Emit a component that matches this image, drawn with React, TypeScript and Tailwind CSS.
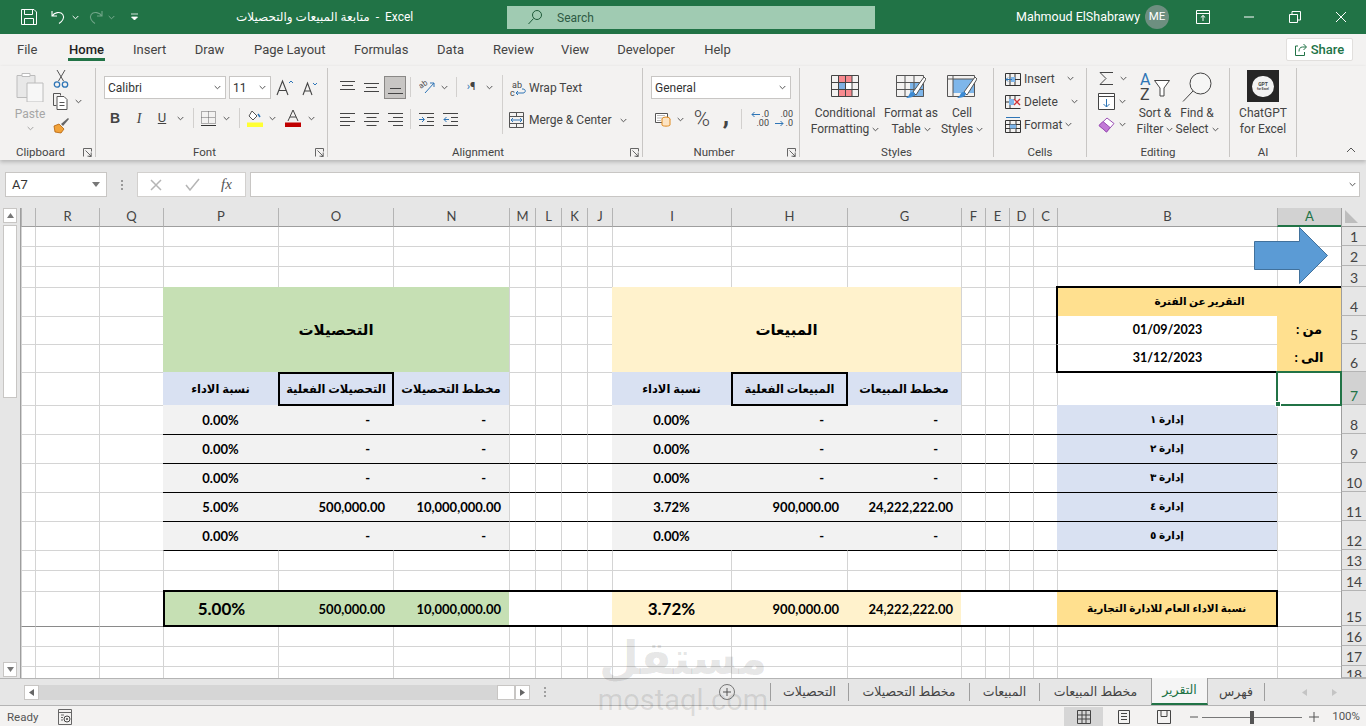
import React from "react";

const cols = ["", "R", "Q", "P", "O", "N", "M", "L", "K", "J", "I", "H", "G", "F", "E", "D", "C", "B", "A"];
const rowNums = Array.from({ length: 18 }, (_, i) => i + 1);

const Chev = ({ c = "#555" }: { c?: string }) => (
  <svg width="7" height="5" viewBox="0 0 7 5" className="shrink-0"><path d="M.7 1l2.8 2.8L6.3 1" fill="none" stroke={c} strokeWidth="1" /></svg>
);
const Launcher = () => (
  <svg width="9" height="9" viewBox="0 0 9 9" className="shrink-0"><path d="M.5 8.500v-8h8v3M2.500 2.500l5.500 5.500M8.200 4.500v3.700H4.500M6 8.500h2.500" fill="none" stroke="#666" strokeWidth="1" /></svg>
);
const Slot = ({ w, children }: { w: string; children?: React.ReactNode }) => (
  <div className={`${w} h-full shrink-0 flex items-center justify-center`}>{children}</div>
);
const Sep = ({ w }: { w: string }) => (
  <div className={`${w} h-full shrink-0 flex items-center justify-center`}><div className="w-px h-[20px] bg-[#d2d0ce]" /></div>
);

function Group({ w, label, launcher, children }: { w: string; label: string; launcher?: boolean; children: React.ReactNode }) {
  return (
    <div className={`${w} shrink-0 flex flex-col h-[89px] border-r border-[#c8c6c4]`}>
      <div className="h-[78px]">{children}</div>
      <div className={`relative h-[11px] leading-[13px] text-center text-[11.5px] text-[#444] ${launcher ? "pr-[14px]" : ""}`}>
        {label}
        {launcher && <span className="absolute right-[3px] top-[2px] flex"><Launcher /></span>}
      </div>
    </div>
  );
}

function TitleBar() {
  return (
    <div className="h-[34px] bg-[#217346] flex items-center text-white text-[12px] shrink-0">
      <div className="w-[20px]" />
      <svg width="18" height="18" viewBox="0 0 18 18" className="mr-[12px]"><path d="M1.500 1.500h12.500l2.500 2.500v12.500h-15zM4.500 1.500v5h8v-5M4.500 16.500v-6h9v6" fill="none" stroke="#fff" strokeWidth="1" /></svg>
      <svg width="16" height="16" viewBox="0 0 16 16"><path d="M2 2v5h5M2.300 7c1.700-3.500 8-5 10.500-1.500 2 3-.3 7-3.800 9" fill="none" stroke="#fff" strokeWidth="1.100" /></svg>
      <div className="w-[6px]" /><Chev c="#fff" /><div className="w-[9px]" />
      <svg width="16" height="16" viewBox="0 0 16 16" opacity=".35"><path d="M14 2v5H9M13.700 7C12 3.500 5.700 2 3.200 5.500c-2 3 .3 7 3.800 9" fill="none" stroke="#fff" strokeWidth="1.100" /></svg>
      <div className="w-[4px]" /><span className="opacity-40 flex"><Chev c="#fff" /></span><div className="w-[15px]" />
      <svg width="9" height="9" viewBox="0 0 9 9"><path d="M1 1h7M1.500 4l3 3 3-3z" fill="#fff" stroke="#fff" strokeWidth=".8" /></svg>
      <div className="w-[97px]" />
      <span className="w-[181px] whitespace-nowrap text-[12px]">متابعة المبيعات والتحصيلات&nbsp; - &nbsp;Excel</span>
      <div className="w-[90px]" />
      <div className="w-[368px] h-[23px] bg-[#a0cbb2] flex items-center pl-[20px] text-[#1f3a2c]">
        <svg width="16" height="16" viewBox="0 0 16 16"><circle cx="10" cy="6" r="4.500" fill="none" stroke="#1f5b3a" strokeWidth="1" /><path d="M6.500 9.500L1.500 15" stroke="#1f5b3a" strokeWidth="1" /></svg>
        <span className="ml-[14px] text-[12px] pt-[1px] text-[#2e5a44]">Search</span>
      </div>
      <div className="w-[141px]" />
      <span className="w-[129px] whitespace-nowrap text-[12.5px]">Mahmoud ElShabrawy</span>
      <div className="w-[24px] h-[24px] rounded-full bg-[#6d8f80] flex items-center justify-center text-[11.5px]">ME</div>
      <div className="w-[27px]" />
      <svg width="14" height="14" viewBox="0 0 14 14"><path d="M.5 .5h13v13H.5zM.5 3.500h13M7 11V5.500M4.800 7.500L7 5.500l2.200 2" fill="none" stroke="#fff" strokeWidth="1" /></svg>
      <div className="w-[33px]" />
      <svg width="12" height="12" viewBox="0 0 12 12"><path d="M1 6h10" stroke="#fff" strokeWidth="1" /></svg>
      <div className="w-[34px]" />
      <svg width="12" height="12" viewBox="0 0 12 12"><path d="M.5 3.500h8v8h-8zM3 3.500V.5h8.500V9H8.500" fill="none" stroke="#fff" strokeWidth="1" /></svg>
      <div className="w-[34px]" />
      <svg width="12" height="12" viewBox="0 0 12 12"><path d="M1 1l10 10M11 1L1 11" stroke="#fff" strokeWidth="1" /></svg>
    </div>
  );
}

function TabsRow() {
  const tabs: [string, string][] = [
    ["File", "w-[19px] ml-[17px]"], ["Home", "w-[37px] ml-[32px]"], ["Insert", "w-[32px] ml-[28px]"], ["Draw", "w-[31px] ml-[29px]"],
    ["Page Layout", "w-[71px] ml-[29px]"], ["Formulas", "w-[54px] ml-[29px]"], ["Data", "w-[27px] ml-[29px]"], ["Review", "w-[40px] ml-[29px]"],
    ["View", "w-[27px] ml-[28px]"], ["Developer", "w-[60px] ml-[28px]"], ["Help", "w-[27px] ml-[28px]"],
  ];
  return (
    <div className="h-[32px] bg-[#f3f2f1] flex items-start shrink-0">
      {tabs.map(([t, c]) => (
        <div key={t} className={`${c} relative pt-[3px] text-center shrink-0`}>
          <span className={`text-[13px] whitespace-nowrap ${t === "Home" ? "text-[#222] font-medium" : "text-[#444]"}`}>{t}</span>
          {t === "Home" && <div className="absolute left-0 right-0 top-[24px] h-[3px] bg-[#217346]" />}
        </div>
      ))}
      <div className="flex-1" />
      <div className="mt-[4px] mr-[13px] w-[67px] h-[23px] bg-white border border-[#e1dfdd] rounded-[2px] flex items-center justify-center gap-[4px] text-[#217346] text-[13px] font-medium">
        <svg width="12" height="13" viewBox="0 0 12 13"><path d="M8.500 1l3 3-3 3M11 4H7.500C5 4 4 6 4 8.500M3 3H.5v9.500h9V9" fill="none" stroke="#217346" strokeWidth="1" /></svg>
        Share
      </div>
    </div>
  );
}

function Clipboard() {
  return (
    <div className="flex h-full pl-[12px]">
      <div className="w-[36px] flex flex-col items-center shrink-0">
        <svg width="28" height="31" viewBox="0 0 28 31" className="mt-[3px]"><path d="M1 4.500h6v-2h6v2h6v9h-7v13H1z" fill="#e8e8e8" stroke="#bcbcbc" /><path d="M11 12h16v19H11z" fill="#f7f7f7" stroke="#bcbcbc" /><path d="M6 2.500h8v3H6z" fill="#fff" stroke="#bcbcbc" /></svg>
        <span className="mt-[4px] text-[12px] leading-[16px] text-[#a6a6a6]">Paste</span>
        <span className="mt-[4px] opacity-50 flex"><Chev /></span>
      </div>
      <div className="flex flex-col items-start pl-[3px]">
        <svg width="16" height="20" viewBox="0 0 16 20" className="ml-[2px] mt-[1px]"><path d="M4 1l6.500 11M12 1L5.500 12" stroke="#555" strokeWidth="1" /><circle cx="4" cy="15.500" r="2.700" fill="none" stroke="#2e75b6" strokeWidth="1.300" /><circle cx="12" cy="15.500" r="2.700" fill="none" stroke="#2e75b6" strokeWidth="1.300" /></svg>
        <div className="flex items-center mt-[4px] ml-[2px]">
          <svg width="16" height="17" viewBox="0 0 16 17"><path d="M.5 .5h7v2M.5 .5v12h3" fill="none" stroke="#555" /><path d="M4 3.500h7l3 3v10H4z" fill="#fff" stroke="#555" /><path d="M6.500 9.500h5M6.500 12.500h5" stroke="#555" /></svg>
          <span className="ml-[6px] flex"><Chev /></span>
        </div>
        <svg width="17" height="17" viewBox="0 0 17 17" className="ml-[2px] mt-[7px]"><path d="M1 9l5-2 5 5-3 4-6-1z" fill="#f2a33a" stroke="#b45f06" strokeWidth=".8" /><path d="M8 7l7-6 1 1-6 7z" fill="#666" /></svg>
      </div>
    </div>
  );
}

function FontGroup() {
  return (
    <div className="flex flex-col pl-[8px] pt-[8px]">
      <div className="flex items-center h-[23px]">
        <div className="w-[122px] h-[23px] bg-white border border-[#c8c6c4] flex items-center pl-[3px] pr-[4px] justify-between text-[12px] text-[#333] shrink-0">Calibri<Chev /></div>
        <div className="w-[42px] ml-[3px] h-[23px] bg-white border border-[#c8c6c4] flex items-center pl-[3px] pr-[4px] justify-between text-[12px] text-[#333] shrink-0">11<Chev /></div>
        <svg width="18" height="18" viewBox="0 0 18 18" className="ml-[5px] shrink-0"><path d="M1 16L6.500 2 12 16M3 11.500h7" fill="none" stroke="#444" strokeWidth="1.100" /><path d="M13 4l2-2 2 2" fill="none" stroke="#2e75b6" /></svg>
        <svg width="16" height="16" viewBox="0 0 16 16" className="ml-[8px] shrink-0"><path d="M1 15L5.500 3 10 15M2.800 11h5.400" fill="none" stroke="#444" strokeWidth="1.100" /><path d="M11 3l2 2 2-2" fill="none" stroke="#2e75b6" /></svg>
      </div>
      <div className="flex items-center h-[24px] mt-[7px]">
        <Slot w="w-[22px]"><span className="text-[14px] font-bold text-[#444] font-['Liberation_Sans',sans-serif]">B</span></Slot>
        <Slot w="w-[26px]"><span className="text-[14px] italic text-[#444] font-['Liberation_Serif',serif]">I</span></Slot>
        <Slot w="w-[20px]"><span className="text-[13px] underline text-[#444]">U</span></Slot>
        <Slot w="w-[16px]"><Chev /></Slot>
        <Sep w="w-[10px]" />
        <Slot w="w-[20px]"><svg width="15" height="15" viewBox="0 0 15 15"><path d="M.5 .5h14v12H.5zM7.500 .5v12M.5 6.500h14" fill="none" stroke="#666" strokeDasharray="1 1" /><path d="M0 14.500h15" stroke="#333" /></svg></Slot>
        <Slot w="w-[16px]"><Chev /></Slot>
        <Sep w="w-[10px]" />
        <Slot w="w-[22px]"><svg width="16" height="17" viewBox="0 0 16 17"><path d="M5 1l5 5-4 4-4-4z" fill="#fff" stroke="#555" /><path d="M11 4l2 3" stroke="#2e75b6" strokeWidth="1.500" /><path d="M0 12.500h16V17H0z" fill="#ffff33" /></svg></Slot>
        <Slot w="w-[12px]"><Chev /></Slot>
        <Slot w="w-[30px]"><svg width="16" height="17" viewBox="0 0 16 17"><path d="M3 11L8 0l5 11M5 7h6" fill="none" stroke="#444" /><path d="M0 12.500h16V17H0z" fill="#c00000" /></svg></Slot>
        <Slot w="w-[6px]"><Chev /></Slot>
      </div>
    </div>
  );
}

function Alignment() {
  return (
    <div className="flex pl-[7px] pt-[7px]">
      <div className="w-[167px] shrink-0 flex flex-col gap-[8px]">
        <div className="flex h-[24px] items-center">
          <Slot w="w-[24px]"><svg width="15" height="15" viewBox="0 0 15 15"><path d="M0 1.500h15M2 5.500h11M0 9.500h15" stroke="#444" /></svg></Slot>
          <Slot w="w-[24px]"><svg width="15" height="15" viewBox="0 0 15 15"><path d="M0 3.500h15M2 7.500h11M0 11.500h15" stroke="#444" /></svg></Slot>
          <Slot w="w-[24px]"><div className="w-[22px] h-[23px] bg-[#c8c6c4] border border-[#8a8886] flex items-center justify-center"><svg width="15" height="15" viewBox="0 0 15 15"><path d="M2 8.500h11M0 13.500h15" stroke="#444" /></svg></div></Slot>
          <Sep w="w-[6px]" />
          <Slot w="w-[28px]"><svg width="17" height="16" viewBox="0 0 17 16"><path d="M6 14L15 4M15 4h-4M15 4v4" fill="none" stroke="#2e75b6" strokeWidth="1" /><text x="0" y="8" fontSize="8" fill="#555" transform="rotate(-35 4 6)">ab</text></svg></Slot>
          <Slot w="w-[7px]"><Chev /></Slot>
          <Sep w="w-[16px]" />
          <Slot w="w-[14px]"><span className="text-[11px] text-[#444] whitespace-nowrap"><span className="text-[#2e75b6]">›</span>¶</span></Slot>
          <Slot w="w-[22px]"><Chev /></Slot>
        </div>
        <div className="flex h-[24px] items-center">
          <Slot w="w-[24px]"><svg width="15" height="13" viewBox="0 0 15 13"><path d="M0 .5h15M0 4.500h10M0 8.500h15M0 12.500h10" stroke="#444" /></svg></Slot>
          <Slot w="w-[24px]"><svg width="15" height="13" viewBox="0 0 15 13"><path d="M0 .5h15M2.500 4.500h10M0 8.500h15M2.500 12.500h10" stroke="#444" /></svg></Slot>
          <Slot w="w-[24px]"><svg width="15" height="13" viewBox="0 0 15 13"><path d="M0 .5h15M5 4.500h10M0 8.500h15M5 12.500h10" stroke="#444" /></svg></Slot>
          <Sep w="w-[6px]" />
          <Slot w="w-[26px]"><svg width="15" height="13" viewBox="0 0 15 13"><path d="M0 .5h15M8 4.500h7M8 8.500h7M0 12.500h15" stroke="#444" /><path d="M0 6.500h5M3 4l2.500 2.500L3 9" fill="none" stroke="#2e75b6" /></svg></Slot>
          <Slot w="w-[22px]"><svg width="15" height="13" viewBox="0 0 15 13"><path d="M0 .5h15M8 4.500h7M8 8.500h7M0 12.500h15" stroke="#444" /><path d="M6 6.500H1M3.500 4L1 6.500 3.500 9" fill="none" stroke="#2e75b6" /></svg></Slot>
        </div>
      </div>
      <div className="w-px h-[59px] bg-[#d2d0ce] shrink-0" />
      <div className="flex flex-col gap-[8px] pl-[6px] pt-[1px] text-[12px] text-[#444]">
        <div className="flex h-[24px] items-center whitespace-nowrap">
          <svg width="18" height="17" viewBox="0 0 18 17" className="mr-[2px] shrink-0"><text x="3" y="8" fontSize="9" fill="#444">ab</text><text x="1" y="16" fontSize="9" fill="#444">c</text><path d="M7 13h7c3 0 3-4 0-4h-1M9 11l-2 2 2 2" fill="none" stroke="#2e75b6" /></svg>
          Wrap Text
        </div>
        <div className="flex h-[24px] items-center whitespace-nowrap">
          <svg width="15" height="16" viewBox="0 0 15 16" className="mr-[5px] shrink-0"><path d="M.5 .5h14v15H.5zM.5 4.500h14M.5 11.500h14M7.500 .5v4M7.500 11.500v4" fill="none" stroke="#555" /><path d="M2 8h11M4 6L2 8l2 2M11 6l2 2-2 2" fill="none" stroke="#2e75b6" /></svg>
          Merge &amp; Center
          <span className="ml-[9px] flex"><Chev /></span>
        </div>
      </div>
    </div>
  );
}

function NumberGroup() {
  return (
    <div className="flex flex-col pl-[8px] pt-[8px]">
      <div className="w-[140px] h-[23px] bg-white border border-[#c8c6c4] flex items-center pl-[3px] pr-[4px] justify-between text-[12px] text-[#333]">General<Chev /></div>
      <div className="flex h-[24px] items-center mt-[8px]">
        <Slot w="w-[23px]"><svg width="16" height="16" viewBox="0 0 16 16"><path d="M.5 2.500h12v9H.5z" fill="#fff" stroke="#555" /><path d="M2.500 4.500h8M2.500 7h8M2.500 9.500h3" stroke="#777" strokeDasharray="1 1" /><ellipse cx="11" cy="8" rx="4" ry="2" fill="#fce4c4" stroke="#e08a1e" /><path d="M7 8v6c0 1.500 8 1.500 8 0V8" fill="#fce4c4" stroke="#e08a1e" /></svg></Slot>
        <Slot w="w-[12px]"><Chev /></Slot>
        <Slot w="w-[32px]"><span className="text-[22px] leading-none text-[#444] font-light">%</span></Slot>
        <Slot w="w-[16px]"><span className="text-[26px] leading-none font-bold text-[#444] -mt-[8px]">,</span></Slot>
        <Sep w="w-[14px]" />
        <Slot w="w-[24px]"><div className="relative w-[18px] h-[16px]"><span className="absolute right-0 -top-[2px] text-[9px] leading-[10px] text-[#444]">.0</span><span className="absolute right-0 top-[7px] text-[9px] leading-[10px] text-[#444]">.00</span><svg width="9" height="7" viewBox="0 0 9 7" className="absolute left-0 top-0"><path d="M9 3.500H1M3.500 1L1 3.500 3.500 6" fill="none" stroke="#2e75b6" /></svg></div></Slot>
        <Slot w="w-[24px]"><div className="relative w-[18px] h-[16px]"><span className="absolute right-0 -top-[2px] text-[9px] leading-[10px] text-[#444]">.00</span><span className="absolute right-0 top-[7px] text-[9px] leading-[10px] text-[#444]">.0</span><svg width="9" height="7" viewBox="0 0 9 7" className="absolute left-0 top-[9px]"><path d="M0 3.500h8M5.500 1L8 3.500 5.500 6" fill="none" stroke="#2e75b6" /></svg></div></Slot>
      </div>
    </div>
  );
}

const Big = ({ w, pad, icon, l1, l2 }: { w: string; pad: string; icon: React.ReactNode; l1: string; l2: string }) => (
  <div className={`${w} shrink-0 flex flex-col items-center text-[12px] leading-[16px] text-[#444] whitespace-nowrap`}>
    <div className={`h-[37px] flex items-start ${pad}`}>{icon}</div>
    <div>{l1}</div>
    <div className="flex items-center gap-[3px]">{l2}<Chev /></div>
  </div>
);

function Styles() {
  const g = "M.5 .5h27v21H.5zM7.500 .5v21M14.500 .5v21M21 .5v21M.5 7.500h27M.5 14.500h27";
  return (
    <div className="flex pl-[8px]">
      <Big w="w-[74px]" pad="pt-[7px]" l1="Conditional" l2="Formatting" icon={
        <svg width="28" height="22" viewBox="0 0 28 22"><path d="M7 0h14v7H7zM7 15h14v7H7z" fill="#f78a8f" /><path d="M7 8h7v7H7z" fill="#7fb0e2" /><path d="M14 8h7v7h-7z" fill="#fff" /><path d={g} fill="none" stroke="#444" /></svg>
      } />
      <Big w="w-[58px]" pad="pt-[7px]" l1="Format as" l2="Table" icon={
        <svg width="30" height="24" viewBox="0 0 30 24"><path d="M14 7h14v15H14z" fill="#7eb6ea" /><path d="M.5 .5h27v21H.5zM.5 7.500h27M.5 14.500h27M9 .5v21M18 .5v21" fill="none" stroke="#555" /><path d="M28 2L17 17l3 3L30 4z" fill="#fff" stroke="#555" /><path d="M14 18c2-2 5-1 5 1-1 3-5 4-9 4 2-1 3-3 4-5z" fill="#3d8bd4" /></svg>
      } />
      <Big w="w-[44px]" pad="pt-[7px]" l1="Cell" l2="Styles" icon={
        <svg width="30" height="24" viewBox="0 0 30 24"><path d="M6 4h21v14H6z" fill="#7eb6ea" /><path d="M.5 .5h27v21H.5zM.5 4h27M6 .5v21" fill="none" stroke="#555" /><path d="M28 2L17 17l3 3L30 4z" fill="#fff" stroke="#555" /><path d="M14 18c2-2 5-1 5 1-1 3-5 4-9 4 2-1 3-3 4-5z" fill="#3d8bd4" /></svg>
      } />
    </div>
  );
}

function Cells() {
  const Row = ({ icon, t, gap }: { icon: React.ReactNode; t: string; gap: string }) => (
    <div className="flex h-[23px] items-center text-[12px] text-[#444] whitespace-nowrap">
      {icon}<span className="ml-[3px]">{t}</span><span className={`${gap} flex`}><Chev /></span>
    </div>
  );
  return (
    <div className="flex flex-col pl-[11px] -mt-px">
      <Row t="Insert" gap="ml-[12px]" icon={<svg width="16" height="16" viewBox="0 0 16 16"><path d="M.5 2.500h15v12H.5zM10 2.500v12M5 2.500v12M.5 8.500h15" fill="none" stroke="#333" /><path d="M6 6h4v5H6z" fill="#7eb6ea" /><path d="M7 8.500H1M3 6.500l-2 2 2 2" fill="none" stroke="#2e75b6" /></svg>} />
      <Row t="Delete" gap="ml-[13px]" icon={<svg width="16" height="16" viewBox="0 0 16 16"><path d="M.5 1.500h15M.5 14.500h15M.5 1.500v13M5 1.500v13M10 1.500v4M.5 8h4" fill="none" stroke="#333" /><path d="M4 5h5v6H4z" fill="#7eb6ea" /><path d="M9 5l6 6M15 5l-6 6" stroke="#d13438" strokeWidth="1.300" /></svg>} />
      <Row t="Format" gap="ml-[3px]" icon={<svg width="16" height="18" viewBox="0 0 16 18"><path d="M.5 4.500h15v12H.5zM.5 8.500h15M.5 12.500h15M5 4.500v12M11 4.500v12" fill="none" stroke="#333" /><path d="M5 8.500h6v4H5z" fill="#7eb6ea" /><path d="M1 1.500h14" stroke="#2e75b6" /></svg>} />
    </div>
  );
}

function Editing() {
  return (
    <div className="flex pl-[11px]">
      <div className="w-[32px] shrink-0 flex flex-col -mt-px">
        <div className="h-[23px] flex items-center">
          <svg width="16" height="15" viewBox="0 0 16 15"><path d="M15 1.500H2l6 6-6 6h13" fill="none" stroke="#444" /></svg>
          <span className="ml-[6px] flex"><Chev /></span>
        </div>
        <div className="h-[23px] flex items-center">
          <svg width="17" height="17" viewBox="0 0 17 17"><path d="M.5 .5h16v16H.5zM.5 3.500h16" fill="#fff" stroke="#444" /><path d="M8.500 6v8M5.500 11l3 3 3-3" fill="none" stroke="#2e75b6" /></svg>
          <span className="ml-[4px] flex"><Chev /></span>
        </div>
        <div className="h-[23px] flex items-center">
          <svg width="17" height="16" viewBox="0 0 17 16"><path d="M1 8.500L9 1l7 5.500-7.500 8.500z" fill="#fff" stroke="#9b4fb5" /><path d="M1 8.500L5 4.500l7 6-3.500 4.500z" fill="#c27ad6" stroke="#9b4fb5" /></svg>
          <span className="ml-[4px] flex"><Chev /></span>
        </div>
      </div>
      <Big w="w-[50px]" pad="pt-[4px]" l1="Sort &" l2="Filter" icon={
        <div className="relative w-[30px] h-[31px] text-[16px] leading-[15px]"><span className="absolute left-0 top-0 text-[#2e75b6]">A</span><span className="absolute left-0 top-[15px] text-[#444]">Z</span><svg width="16" height="17" viewBox="0 0 16 17" className="absolute right-0 top-[8px]"><path d="M.5 .5h15L10 8v8H6V8z" fill="#fff" stroke="#444" /></svg></div>
      } />
      <Big w="w-[34px]" pad="pt-[4px]" l1="Find &" l2="Select" icon={
        <svg width="30" height="30" viewBox="0 0 30 30"><circle cx="18.500" cy="11.500" r="10.500" fill="#fff" fillOpacity=".3" stroke="#444" /><path d="M11 19L1 29.500" stroke="#444" /></svg>
      } />
    </div>
  );
}

function AI() {
  return (
    <div className="flex flex-col items-center text-[12px] leading-[16px] text-[#444]">
      <div className="w-[32px] h-[32px] mt-[2px] mb-[3px] bg-[#262626] flex items-center justify-center">
        <div className="w-[22px] h-[21px] rounded-full bg-[#f2f2f2] flex flex-col items-center justify-center text-[5px] leading-[5px] font-bold text-[#444]"><span>GPT</span><span className="text-[3px] leading-[4px]">for Excel</span></div>
      </div>
      <div>ChatGPT</div>
      <div>for Excel</div>
    </div>
  );
}

function Ribbon() {
  return (
    <div className="relative z-10 h-[94px] bg-[#f3f2f1] shadow-[0_2px_4px_rgba(0,0,0,0.22)] flex items-start pt-[2px] shrink-0">
      <Group w="w-[96px]" label="Clipboard" launcher><Clipboard /></Group>
      <Group w="w-[232px]" label="Font" launcher><FontGroup /></Group>
      <Group w="w-[315px]" label="Alignment" launcher><Alignment /></Group>
      <Group w="w-[157px]" label="Number" launcher><NumberGroup /></Group>
      <Group w="w-[194px]" label="Styles"><Styles /></Group>
      <Group w="w-[93px]" label="Cells"><Cells /></Group>
      <Group w="w-[143px]" label="Editing"><Editing /></Group>
      <Group w="w-[67px]" label="AI"><AI /></Group>
      <div className="flex-1 h-[85px] flex items-end justify-end pr-[10px]">
        <svg width="10" height="6" viewBox="0 0 10 6"><path d="M1 5l4-4 4 4" fill="none" stroke="#555" /></svg>
      </div>
    </div>
  );
}

function FormulaBar() {
  return (
    <div className="h-[48px] bg-[#e6e6e6] flex items-start pt-[12px] pl-[5px] pr-[6px] shrink-0">
      <div className="w-[102px] h-[25px] bg-white border border-[#c8c6c4] flex items-center justify-between pl-[6px] pr-[6px] text-[13px] text-[#333]">
        A7
        <svg width="8" height="5" viewBox="0 0 8 5"><path d="M0 0h8L4 5z" fill="#777" /></svg>
      </div>
      <div className="w-[30px] h-[25px] flex flex-col items-center justify-center gap-[2px]">
        <div className="w-[2px] h-[2px] bg-[#999]" /><div className="w-[2px] h-[2px] bg-[#999]" /><div className="w-[2px] h-[2px] bg-[#999]" />
      </div>
      <div className="w-[109px] h-[25px] bg-white border border-[#d2d0ce] flex items-center pl-[12px]">
        <svg width="12" height="12" viewBox="0 0 12 12"><path d="M1 1l10 10M11 1L1 11" stroke="#b5b5b5" strokeWidth="1.500" /></svg>
        <svg width="15" height="13" viewBox="0 0 15 13" className="ml-[23px]"><path d="M1 7l4 5 9-11" fill="none" stroke="#b5b5b5" strokeWidth="1.500" /></svg>
        <span className="ml-[21px] text-[15px] italic text-[#555] font-['Liberation_Serif',serif]">fx</span>
      </div>
      <div className="ml-[4px] flex-1 h-[25px] bg-white border border-[#c8c6c4] flex items-center justify-end pr-[3px]"><Chev /></div>
    </div>
  );
}

const grid = "border-l border-t border-[#d4d4d4]";
const num = "flex items-center justify-end pr-[8px] pt-[2px] font-bold text-[13px] text-black whitespace-nowrap";
const dash = "flex items-center justify-end pr-[23px] pt-[2px] font-bold text-[13px] text-black";
const pct = "flex items-center justify-center pt-[2px] font-bold text-[13px] text-black";
const ar = "flex items-center justify-center font-bold text-[11.5px] text-black whitespace-nowrap";
const arS = "flex items-center justify-center font-bold text-[10.5px] text-black whitespace-nowrap";
const arL = "flex items-center justify-center font-bold text-[13px] text-black whitespace-nowrap";

const vals: Record<number, [string, string, string, string, string, string]> = {
  8: ["0.00%", "-", "-", "0.00%", "-", "-"],
  9: ["0.00%", "-", "-", "0.00%", "-", "-"],
  10: ["0.00%", "-", "-", "0.00%", "-", "-"],
  11: ["5.00%", "500,000.00", "10,000,000.00", "3.72%", "900,000.00", "24,222,222.00"],
  12: ["0.00%", "-", "-", "0.00%", "-", "-"],
};
const idara: Record<number, string> = { 8: "إدارة ١", 9: "إدارة ٢", 10: "إدارة ٣", 11: "إدارة ٤", 12: "إدارة ٥" };
const spacers = ["M", "L", "K", "J", "F", "E", "D", "C"];

function renderCell(r: number, c: string): React.ReactNode {
  const k = `${r}-${c}`;
  const inBlock = r >= 4 && r <= 6;
  if (inBlock && ["O", "N", "H", "G"].includes(c)) return null;
  if (inBlock && (c === "P" || c === "I")) {
    if (r !== 4) return null;
    return c === "P"
      ? <div key={k} className="col-span-3 row-span-3 bg-[#c6e0b4] flex items-center justify-center font-bold text-[15px] text-black">التحصيلات</div>
      : <div key={k} className="col-span-3 row-span-3 bg-[#fff2cc] flex items-center justify-center font-bold text-[15px] text-black">المبيعات</div>;
  }

  if (r === 4 && c === "A") return null;
  if (r === 4 && c === "B") return <div key={k} className={`relative z-[1] col-span-2 bg-[#ffe08f] border-t-2 border-l-2 border-black -mt-px -ml-px ${arS}`}>التقرير عن الفترة</div>;
  if ((r === 5 || r === 6) && c === "B") {
    const b = r === 6 ? "border-t border-t-[#d4d4d4] border-b-2 border-b-black -mb-px" : "";
    return <div key={k} className={`relative z-[1] bg-white border-l-2 border-l-black -ml-px ${b} flex items-center justify-center pt-[1px] font-bold text-[12.5px] text-black`}>{r === 5 ? "01/09/2023" : "31/12/2023"}</div>;
  }
  if ((r === 5 || r === 6) && c === "A") {
    const b = r === 6 ? "border-b-2 border-black -mb-px relative z-[1]" : "";
    return <div key={k} dir="rtl" className={`bg-[#ffe08f] ${b} ${arL}`}>{r === 5 ? "من :" : "الى :"}</div>;
  }

  if (r === 7) {
    if (c === "P" || c === "I") return <div key={k} className={`bg-[#d9e1f2] ${ar}`}>نسبة الاداء</div>;
    if (c === "O") return <div key={k} className={`relative z-[1] bg-[#d9e1f2] border-2 border-black -mr-px -mb-px ${ar}`}>التحصيلات الفعلية</div>;
    if (c === "N") return <div key={k} className={`bg-[#d9e1f2] ${ar}`}>مخطط التحصيلات</div>;
    if (c === "H") return <div key={k} className={`relative z-[1] bg-[#d9e1f2] border-2 border-black -mr-px -mb-px ${ar}`}>المبيعات الفعلية</div>;
    if (c === "G") return <div key={k} className={`bg-[#d9e1f2] ${ar}`}>مخطط المبيعات</div>;
    if (c === "B") return <div key={k} className="bg-white border-l border-[#d4d4d4]" />;
    if (c === "A") return (
      <div key={k} className="relative z-[2] border-2 border-[#217346] -ml-px -mt-px -mb-px -mr-px">
        <span className="absolute -left-[3px] -bottom-[3px] w-[6px] h-[6px] bg-[#217346] border border-white" />
      </div>
    );
  }

  if (r >= 8 && r <= 12) {
    const line = r === 8 ? "" : "border-t border-t-black";
    const v = vals[r];
    const txt = (s: string) => (s === "-" ? dash : num);
    if (c === "P") return <div key={k} className={`bg-[#f2f2f2] ${line} ${pct}`}>{v[0]}</div>;
    if (c === "O") return <div key={k} className={`bg-[#f2f2f2] ${line} ${txt(v[1])}`}>{v[1]}</div>;
    if (c === "N") return <div key={k} className={`bg-[#f2f2f2] ${line} ${txt(v[2])}`}>{v[2]}</div>;
    if (c === "I") return <div key={k} className={`bg-[#f2f2f2] ${line} ${pct}`}>{v[3]}</div>;
    if (c === "H") return <div key={k} className={`bg-[#f2f2f2] ${line} ${txt(v[4])}`}>{v[4]}</div>;
    if (c === "G") return <div key={k} className={`bg-[#f2f2f2] ${line} ${txt(v[5])}`}>{v[5]}</div>;
    if (c === "B") return <div key={k} className={`bg-[#d9e1f2] ${line} ${arS}`}>{idara[r]}</div>;
    if (spacers.includes(c)) return <div key={k} className={r === 8 ? grid : `border-l border-l-[#d4d4d4] ${line}`} />;
  }

  if (r === 15) {
    const box = "relative z-[1] border-y-2 border-black -mt-px -mb-px";
    if (c === "P") return <div key={k} className={`bg-[#c6e0b4] border-l-2 ${box} flex items-center justify-center font-bold text-[17px] text-black`}>5.00%</div>;
    if (c === "O") return <div key={k} className={`bg-[#c6e0b4] ${box} ${num}`}>500,000.00</div>;
    if (c === "N") return <div key={k} className={`bg-[#c6e0b4] ${box} ${num}`}>10,000,000.00</div>;
    if (c === "I") return <div key={k} className={`bg-[#fff2cc] ${box} flex items-center justify-center font-bold text-[17px] text-black`}>3.72%</div>;
    if (c === "H") return <div key={k} className={`bg-[#fff2cc] ${box} ${num}`}>900,000.00</div>;
    if (c === "G") return <div key={k} className={`bg-[#fff2cc] ${box} ${num}`}>24,222,222.00</div>;
    if (c === "B") return <div key={k} className={`bg-[#ffe08f] border-r-2 -mr-px ${box} ${arS}`}>نسبة الاداء العام للادارة التجارية</div>;
    if (spacers.includes(c)) return <div key={k} className={box} />;
    return <div key={k} className={grid} />;
  }
  if (r === 1) return <div key={k} className="border-l border-[#d4d4d4]" />;
  if (r === 13 && !["", "R", "Q", "A"].includes(c)) return <div key={k} className="border-l border-l-[#d4d4d4] border-t border-t-black" />;
  if (r === 16) return <div key={k} className="border-l border-l-[#d4d4d4] border-t border-t-[#8a8a8a]" />;
  return <div key={k} className={grid} />;
}

function Sheet() {
  return (
    <div className="flex h-[470px] shrink-0 bg-white">
      <div className="w-[21px] shrink-0 bg-[#e6e6e6] flex flex-col pl-[3px] pr-[3px] border-r border-[#9e9e9e]">
        <div className="h-[15px] bg-white border border-[#c8c6c4] flex items-center justify-center"><svg width="7" height="5" viewBox="0 0 7 5"><path d="M3.500 0L7 5H0z" fill="#777" /></svg></div>
        <div className="mt-[2px] h-[173px] bg-white border border-[#c8c6c4]" />
        <div className="flex-1" />
        <div className="h-[15px] bg-white border border-[#c8c6c4] flex items-center justify-center mb-[1px]"><svg width="7" height="5" viewBox="0 0 7 5"><path d="M3.500 5L7 0H0z" fill="#777" /></svg></div>
      </div>
      <div className="relative flex-1 overflow-hidden grid grid-cols-[14px_64px_64px_115px_115px_116px_26px_26px_26px_25px_119px_116px_114px_24px_24px_24px_24px_220px_64px_25px] grid-rows-[19px_19px_20px_21px_29px_28px_28px_33px_29px_29px_29px_29px_29px_20px_21px_35px_20px_20px_12px] text-[#444] font-['Lato','DejaVu_Sans',sans-serif]">
        {cols.map((c) => (
          <div key={c || "s"} className={`border-b text-[13px] flex items-center justify-center border-l border-l-[#b4b4b4] ${c === "A" ? "bg-[#d2d2d2] text-[#217346] border-b-2 border-b-[#217346]" : "bg-[#e6e6e6] border-b-[#9e9e9e]"}`}>{c}</div>
        ))}
        <div className="bg-[#e6e6e6] border-b border-l border-[#9e9e9e] flex items-end justify-start pl-[3px] pb-[3px]"><svg width="13" height="13" viewBox="0 0 13 13"><path d="M0 0l13 13H0z" fill="#bdbdbd" /></svg></div>
        {rowNums.map((r) => (
          <React.Fragment key={r}>
            {cols.map((c) => renderCell(r, c))}
            <div className={`border-l border-l-[#9e9e9e] border-b border-b-[#b4b4b4] flex justify-center text-[14px] leading-[17px] overflow-hidden ${r === 18 ? "items-start" : "items-end"} ${r === 7 ? "bg-[#d2d2d2] text-[#217346]" : "bg-[#e6e6e6]"}`}>{r}</div>
          </React.Fragment>
        ))}
        <svg width="75" height="57" viewBox="0 0 75 57" className="absolute left-[1233px] top-[19px]"><path d="M.5 14.500h45V.5l28 28-28 28v-14H.5z" fill="#5b9bd5" stroke="#41719c" /></svg>
      </div>
    </div>
  );
}

function TabBar() {
  const tabs: [string, string][] = [["التحصيلات", "w-[78px]"], ["مخطط التحصيلات", "w-[121px]"], ["المبيعات", "w-[70px]"], ["مخطط المبيعات", "w-[112px]"]];
  return (
    <div className="h-[28px] bg-[#e6e6e6] border-y border-[#b4b4b4] flex items-stretch shrink-0 text-[12.5px] text-[#444]">
      <div className="w-[24px]" />
      <div className="h-[15px] mt-[6px] flex w-[506px]">
        <div className="w-[15px] bg-white border border-[#c8c6c4] flex items-center justify-center"><svg width="5" height="7" viewBox="0 0 5 7"><path d="M0 3.500L5 0v7z" fill="#666" /></svg></div>
        <div className="flex-1 bg-[#d6d6d6]" />
        <div className="w-[18px] bg-white border border-[#c8c6c4]" />
        <div className="w-[15px] bg-white border border-[#c8c6c4] flex items-center justify-center"><svg width="5" height="7" viewBox="0 0 5 7"><path d="M5 3.500L0 0v7z" fill="#666" /></svg></div>
      </div>
      <div className="w-[30px] flex flex-col items-center justify-center gap-[2px]"><div className="w-[2px] h-[2px] bg-[#a0a0a0]" /><div className="w-[2px] h-[2px] bg-[#a0a0a0]" /><div className="w-[2px] h-[2px] bg-[#a0a0a0]" /></div>
      <div className="w-[210px] flex items-center justify-end pr-[35px]">
        <svg width="16" height="16" viewBox="0 0 16 16"><circle cx="8" cy="8" r="7.500" fill="none" stroke="#777" /><path d="M8 4v8M4 8h8" stroke="#555" /></svg>
      </div>
      {tabs.map(([t, w]) => (
        <div key={t} className={`${w} flex items-center justify-center border-l border-[#9e9e9e] my-[4px] whitespace-nowrap`}>{t}</div>
      ))}
      <div className="w-[57px] bg-[#f5f5f5] border-x border-[#9e9e9e] border-b-2 border-b-[#217346] flex items-center justify-center text-[#217346] font-medium -mt-px">التقرير</div>
      <div className="w-[57px] flex items-center justify-center border-r border-[#9e9e9e] my-[4px]">فهرس</div>
      <div className="flex-1 flex items-center justify-around pl-[24px] pr-[16px]">
        <svg width="5" height="7" viewBox="0 0 5 7"><path d="M0 3.500L5 0v7z" fill="#c4c4c4" /></svg>
        <svg width="5" height="7" viewBox="0 0 5 7"><path d="M5 3.500L0 0v7z" fill="#c4c4c4" /></svg>
      </div>
    </div>
  );
}

function StatusBar() {
  return (
    <div className="flex-1 bg-[#f3f2f1] flex items-center text-[11.5px] text-[#555] pl-[7px] pt-[1px]">
      <span className="w-[51px] pt-[1px]">Ready</span>
      <svg width="14" height="16" viewBox="0 0 14 16"><path d="M.5 .5h13v15H.5zM.5 3.500h13M3 6h3M3 8.500h2M3 11h2" fill="none" stroke="#666" /><circle cx="9" cy="10" r="3" fill="none" stroke="#444" /><circle cx="9" cy="10" r="1" fill="#444" /></svg>
      <div className="flex-1" />
      <div className="w-[39px] h-[20px] bg-[#d6d6d6] flex items-center justify-center"><svg width="14" height="14" viewBox="0 0 14 14"><path d="M.5 .5h13v13H.5zM5 .5v13M9 .5v13M.5 5h13M.5 9h13" fill="none" stroke="#444" /></svg></div>
      <div className="w-[41px] flex justify-center"><svg width="12" height="14" viewBox="0 0 12 14"><path d="M.5 .5h11v13H.5zM3 3.500h6M3 6.500h6M3 9.500h6" fill="none" stroke="#444" /></svg></div>
      <div className="w-[39px] flex justify-center"><svg width="14" height="14" viewBox="0 0 14 14"><path d="M.5 .5h13v13H.5zM4 .5v6h6v-6" fill="none" stroke="#444" /></svg></div>
      <svg width="8" height="2" viewBox="0 0 8 2" className="ml-[7px]"><path d="M0 1h8" stroke="#555" /></svg>
      <div className="relative w-[100px] h-px bg-[#777] mx-[4px]"><div className="absolute left-[48px] -top-[6px] w-[4px] h-[13px] bg-[#555]" /></div>
      <svg width="10" height="10" viewBox="0 0 10 10" className="ml-[3px]"><path d="M0 5h10M5 0v10" stroke="#555" /></svg>
      <span className="ml-[13px] mr-[6px]">100%</span>
    </div>
  );
}

export default function App() {
  return (
    <div className="relative w-[1366px] h-[726px] overflow-hidden flex flex-col font-['Roboto','DejaVu_Sans',sans-serif]">
      <TitleBar />
      <TabsRow />
      <Ribbon />
      <FormulaBar />
      <Sheet />
      <TabBar />
      <StatusBar />
      <div className="absolute left-[600px] top-[633px] w-[166px] flex flex-col items-center pointer-events-none text-black/10">
        <span className="text-[46px] leading-[50px] font-bold font-['DejaVu_Sans',sans-serif]">مستقل</span>
        <span className="text-[29px] leading-[34px] font-['Roboto',sans-serif]">mostaql.com</span>
      </div>
    </div>
  );
}
